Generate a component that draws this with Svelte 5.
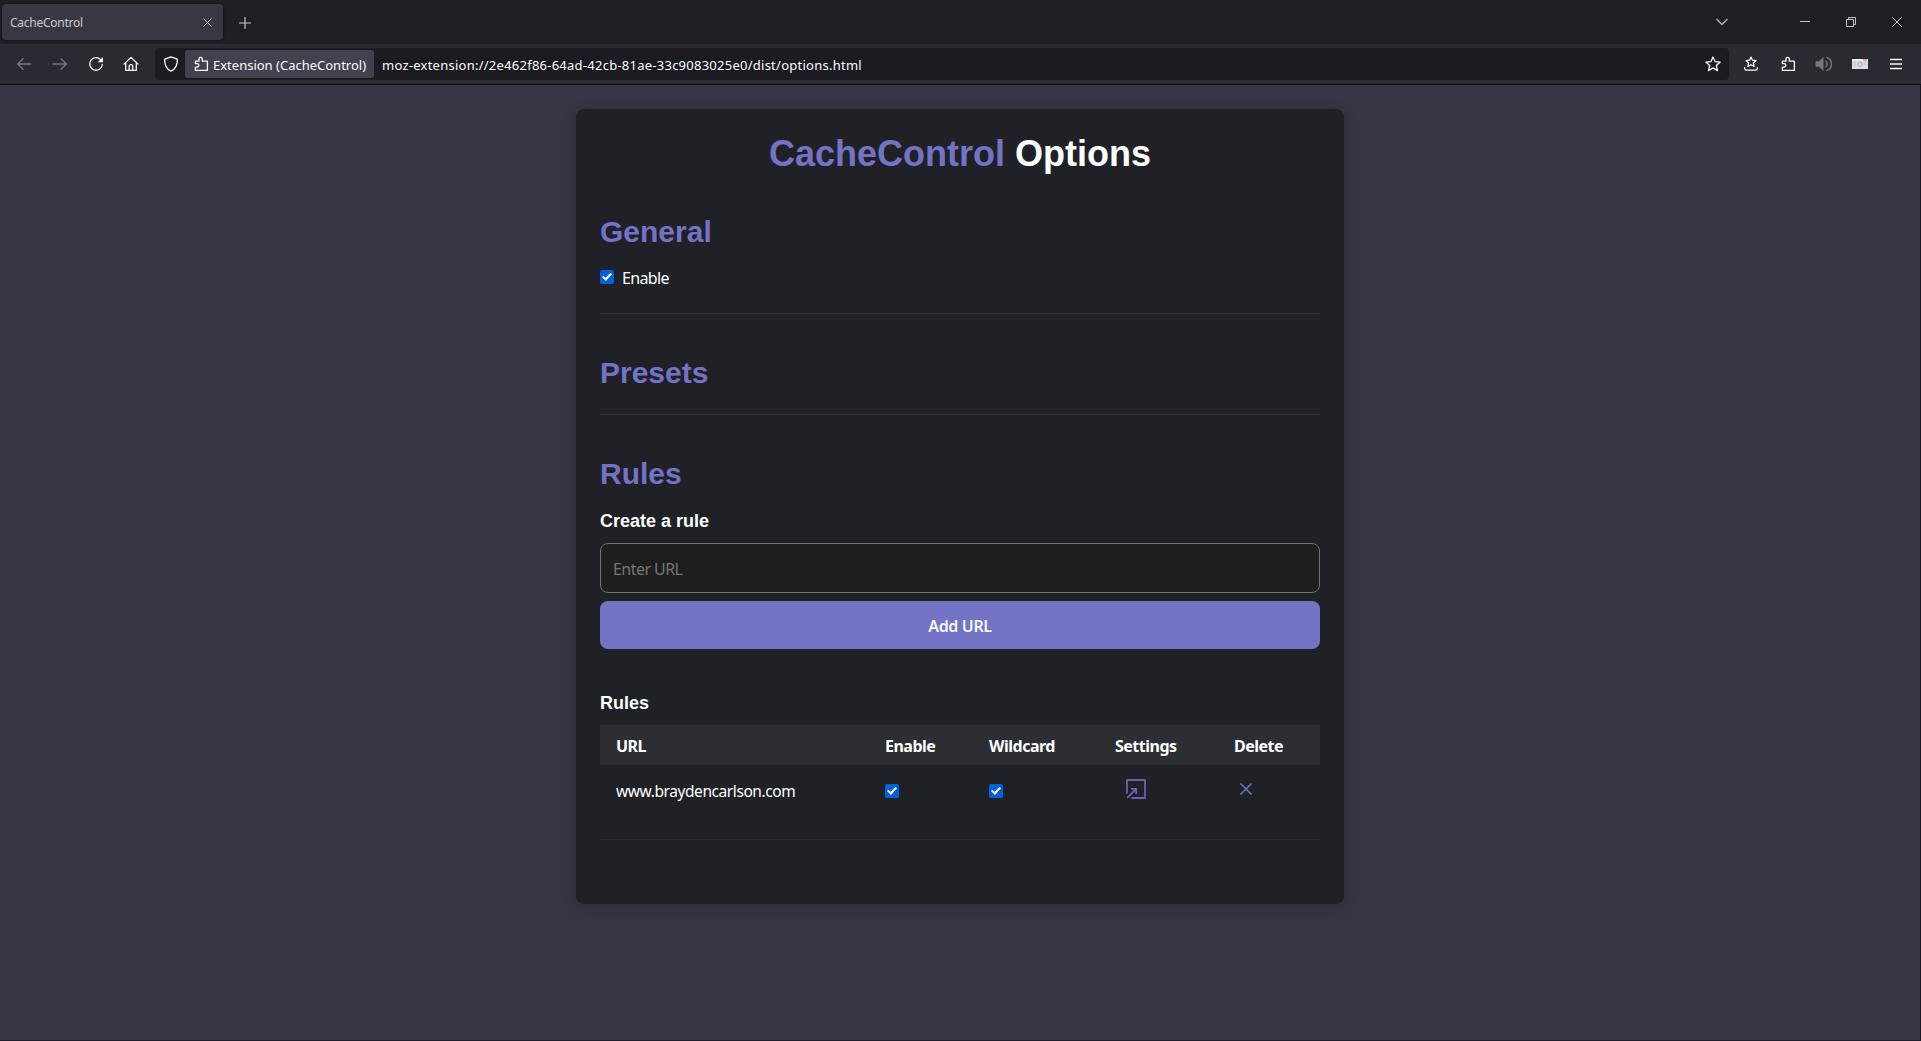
<script>
  let enabled = $state(true);
  let url = $state('');
  let rules = $state([{ url: 'www.braydencarlson.com', enable: true, wildcard: true }]);
</script>

{#snippet puzzle()}
  <svg width="16" height="16" viewBox="0 0 16 16" class="line puzzle"><path d="M2.4 14.4V11.1H4.1A1.6 1.6 0 0 0 4.1 7.6H2.4V5.2H6V3A1.6 1.6 0 0 1 9.3 3V5.2H14Q14.4 5.2 14.4 5.8V14.4Z" /></svg>
{/snippet}

<div class="browser">
  <header class="tabs">
    <div class="tab">
      <span class="tab-title">CacheControl</span>
      <svg width="9" height="9" viewBox="0 0 9 9" class="thin"><path d="M.5 .5 8.5 8.5M8.5 .5 .5 8.5" /></svg>
    </div>
    <svg class="plus" width="12" height="12" viewBox="0 0 12 12"><path d="M6 0V12M0 6H12" /></svg>
    <div class="window">
      <svg width="12" height="8" viewBox="0 0 12 8" class="chev"><path d="M.5 1 6 6.5 11.5 1" /></svg>
      <svg width="10" height="10" viewBox="0 0 10 10" class="thin min"><path d="M0 4.5H10" /></svg>
      <svg width="10" height="10" viewBox="0 0 10 10" class="thin max"><path d="M.5 2.5H7.5V9.5H.5ZM2.5 2.5V.5H9.5V7.5H7.5" /></svg>
      <svg width="10" height="10" viewBox="0 0 10 10" class="thin"><path d="M.2 .2 9.8 9.8M9.8 .2 .2 9.8" /></svg>
    </div>
  </header>

  <nav class="toolbar">
    <div class="navs">
      <svg width="16" height="16" viewBox="0 0 16 16" class="line dim"><path d="M15 8H1.8M7 2.7 1.7 8 7 13.3" /></svg>
      <svg width="16" height="16" viewBox="0 0 16 16" class="line dim"><path d="M1 8H14.2M9 2.7 14.3 8 9 13.3" /></svg>
      <svg width="16" height="16" viewBox="0 0 16 16" class="line"><path d="M12.6 3.6A6.3 6.3 0 1 0 14.3 8.5" /><path d="M15 .9V6.2H9.7Z" fill="#fbfbfe" stroke="none" /></svg>
      <svg width="16" height="16" viewBox="0 0 16 16" class="line home"><path d="M1 8.1 8 1.4 15 8.1M2.7 7V14.3H13.3V7M6.2 14.3V10.4A1.8 1.8 0 0 1 9.8 10.4V14.3" /></svg>
    </div>
    <div class="address">
      <svg class="line shield" width="16" height="16" viewBox="0 0 16 16"><path d="M8 .9 14.3 3.2C14.6 9 12.5 13 8 15.2 3.5 13 1.4 9 1.7 3.2Z" /></svg>
      <div class="identity">{@render puzzle()}<span>Extension (CacheControl)</span></div>
      <span class="location">moz-extension://2e462f86-64ad-42cb-81ae-33c9083025e0/dist/options.html</span>
      <svg class="line star" width="16" height="16" viewBox="0 0 16 16"><path d="M8 1 10 5.6 15.2 6.1 11.3 9.5 12.5 14.6 8 11.9 3.5 14.6 4.7 9.5 .8 6.1 6 5.6Z" /></svg>
    </div>
    <div class="actions">
      <svg width="16" height="16" viewBox="0 0 16 16" class="line"><path d="M8 1 9.5 4.2 13 4.6 10.4 6.9 11.1 10.4 8 8.7 4.9 10.4 5.6 6.9 3 4.6 6.5 4.2ZM1.7 11.6V12.4Q1.7 14.2 3.4 14.2H12.6Q14.3 14.2 14.3 12.4V11.6" /></svg>
      {@render puzzle()}
      <svg width="17" height="16" viewBox="0 0 17 16" class="sound"><path d="M.5 5.3H4L8.5 1V15L4 10.8H.5Z" class="cone" /><path d="M10.5 5A3.5 3.5 0 0 1 10.5 11M11.5 1.3A7 7 0 0 1 11.5 14.7" /></svg>
      <svg width="16" height="16" viewBox="0 0 16 16"><path d="M0 3H16V13H0Z" fill="#dededc" /><path d="M0 3H16V4.5H0Z" fill="#f1f1ef" /><path d="M11 3H15V4.5H11Z" fill="#c9918b" /><path d="M1 6H4M1 8H4M1 10H4M12 6H15M12 8H15" stroke="#c3c3c1" /><circle cx="8" cy="8.2" r="2.2" fill="none" stroke="#aaa" /></svg>
      <svg width="12" height="16" viewBox="0 0 12 16" class="line menu"><path d="M0 3.5H12M0 8H12M0 12.5H12" /></svg>
    </div>
  </nav>

  <main>
    <div class="card">
      <h1><em>CacheControl</em> Options</h1>

      <section class="general">
        <h2>General</h2>
        <label class="enable">
          <input type="checkbox" bind:checked={enabled} /><span>Enable</span>
        </label>
      </section>

      <section class="presets">
        <h2>Presets</h2>
      </section>

      <section class="rules">
        <h2>Rules</h2>
        <h3>Create a rule</h3>
        <input class="url" type="text" placeholder="Enter URL" bind:value={url} />
        <button class="add"><span>Add URL</span></button>
        <h3 class="list-title">Rules</h3>
        <div class="row head">
          <span>URL</span><span>Enable</span><span>Wildcard</span><span>Settings</span><span>Delete</span>
        </div>
        {#each rules as rule}
          <div class="row">
            <span class="host">{rule.url}</span>
            <input type="checkbox" bind:checked={rule.enable} />
            <input type="checkbox" bind:checked={rule.wildcard} />
            <svg class="open" width="20" height="20" viewBox="0 0 20 20"><path d="M1 14.5V1H19V19H5.5M1.2 18.8 10 10M5 9.8H10.2V15" /></svg>
            <svg class="remove" width="12" height="12" viewBox="0 0 12 12"><path d="M.5 .5 11.5 11.5M11.5 .5 .5 11.5" /></svg>
          </div>
        {/each}
      </section>
    </div>
  </main>
</div>

<style>
  :global(body) { background: #1f1e25; overflow: hidden; }
  * { box-sizing: border-box; }
  svg { display: block; flex: none; fill: none; }
  .browser {
    width: 1921px; height: 1041px; display: flex; flex-direction: column;
    font-family: "Noto Sans", "Open Sans", sans-serif; color: #fff; white-space: nowrap;
  }
  .tabs { height: 44px; display: flex; align-items: center; background: #1f1e25; padding-left: 2px; }
  .tab {
    width: 221px; height: 36px; border-radius: 4px; background: #393842; box-shadow: 0 0 3px #0008;
    display: flex; align-items: center; justify-content: space-between; padding: 0 11px 0 8px;
  }
  .tab-title { font-size: 12px; color: #c9c9cf; letter-spacing: -.25px; padding-top: 1px; }
  .thin { stroke: #c4c4c8; stroke-width: 1; }
  .plus { margin: 1px 0 0 16px; stroke: #c4c4c8; stroke-width: 1.2; }
  .window { margin: 0 19px 0 auto; display: flex; align-items: center; }
  .chev { stroke: #b5b5ba; stroke-width: 1.3; }
  .min { margin-left: 72px; }
  .max { margin: 0 36px; }
  .toolbar { height: 41px; background: #2b2a33; border-bottom: 1px solid #0c0c0d; display: flex; align-items: center; }
  .line { stroke: #fbfbfe; stroke-width: 1.3; stroke-linejoin: round; stroke-linecap: round; }
  .dim { stroke: #77767e; }
  .navs { display: flex; gap: 20px; padding-left: 16px; width: 155px; }
  .home { margin-left: -1px; }
  .address { width: 1574px; height: 32px; background: #1c1b22; border-radius: 4px; display: flex; align-items: center; }
  .shield { margin-left: 8px; }
  .identity {
    height: 28px; width: 189px; margin-left: 6px; padding-left: 8px; border-radius: 3px;
    background: #42414d; display: flex; align-items: center; gap: 4px; font-size: 13px; color: #fbfbfe;
  }
  .identity span { padding-top: 2px; }
  .location { margin-left: 8px; padding-top: 2px; font-size: 13px; color: #fbfbfe; letter-spacing: .25px; }
  .star { margin: 0 8px 0 auto; }
  .actions { margin-left: 14px; display: flex; align-items: center; gap: 20px; }
  .actions :global(.puzzle) { margin: 0 -1px 0 1px; }
  .sound { stroke: #77767a; stroke-width: 1.4; }
  .sound .cone { fill: #77767a; stroke: none; }
  .menu { stroke-linecap: butt; margin-left: 2px; }

  main {
    flex: 1; background: #343641; padding-top: 24px; display: flex; justify-content: center; align-items: flex-start;
    border-right: 1px solid #17161d; border-bottom: 1px solid #211f2b;
  }
  .card {
    width: 768px; height: 795px; padding: 21px 24px 20px; border-radius: 8px;
    background: #202126; box-shadow: 0 4px 16px rgba(0, 0, 0, .12);
  }
  h1, h2, h3 { margin: 0; font-family: "Liberation Sans", Arial, sans-serif; font-weight: 700; }
  h1 { font-size: 36px; line-height: 48px; text-align: center; }
  h1 em { font-style: normal; color: #7373c6; }
  h2 { font-size: 30px; line-height: 36px; color: #7373c6; }
  h3 { font-size: 18px; line-height: 24px; }
  section { border-bottom: 1px solid #2e2f34; }
  .general { margin-top: 36px; height: 100px; }
  .presets { padding-top: 41px; height: 101px; }
  .rules { padding-top: 41px; height: 425px; }
  .enable { display: flex; align-items: center; height: 24px; margin-top: 16px; gap: 8px; font-size: 16px; }
  .enable span { letter-spacing: -.65px; }
  input[type="checkbox"] {
    appearance: none; width: 14px; height: 14px; margin: 0; border-radius: 2px; background: #0060df;
    display: grid; place-items: center; flex: none;
  }
  .enable input { margin-top: -2px; }
  input[type="checkbox"]:checked::before {
    content: ""; width: 10px; height: 8px; background: #fff;
    clip-path: polygon(0 50%, 14% 34%, 37% 60%, 84% 0, 100% 15%, 39% 100%);
  }
  .rules h3 { margin-top: 17px; }
  .url {
    display: block; width: 720px; height: 50px; margin: 10px 0 8px; padding: 2px 12px 0; border: 1px solid #75756f;
    border-radius: 8px; background: #1e1e1e; color: #fff; font: 16px "Noto Sans", sans-serif; letter-spacing: -.55px;
  }
  .url::placeholder { color: #757575; }
  .add {
    display: block; width: 720px; height: 48px; border: 0; border-radius: 8px; background: #7373c6;
    color: #f7f7fc; font: 600 16px "Noto Sans", sans-serif; letter-spacing: -.35px; padding: 2px 0 0;
  }
  .rules .list-title { margin: 42px 0 10px; }
  .row {
    display: grid; grid-template-columns: 269px 104px 126px 119px 1fr; align-items: center;
    height: 50px; padding: 2px 0 0 16px; font-size: 16px;
  }
  .head { height: 40px; background: #2d2e33; font-weight: 700; letter-spacing: -.5px; }
  .host { font-size: 15.5px; letter-spacing: -.42px; }
  .open { margin: -4px 0 0 11px; stroke: #6762b2; stroke-width: 1.8; stroke-linejoin: round; }
  .remove { margin: -4px 0 0 6px; stroke: #7373c6; stroke-width: 1.5; }
</style>
